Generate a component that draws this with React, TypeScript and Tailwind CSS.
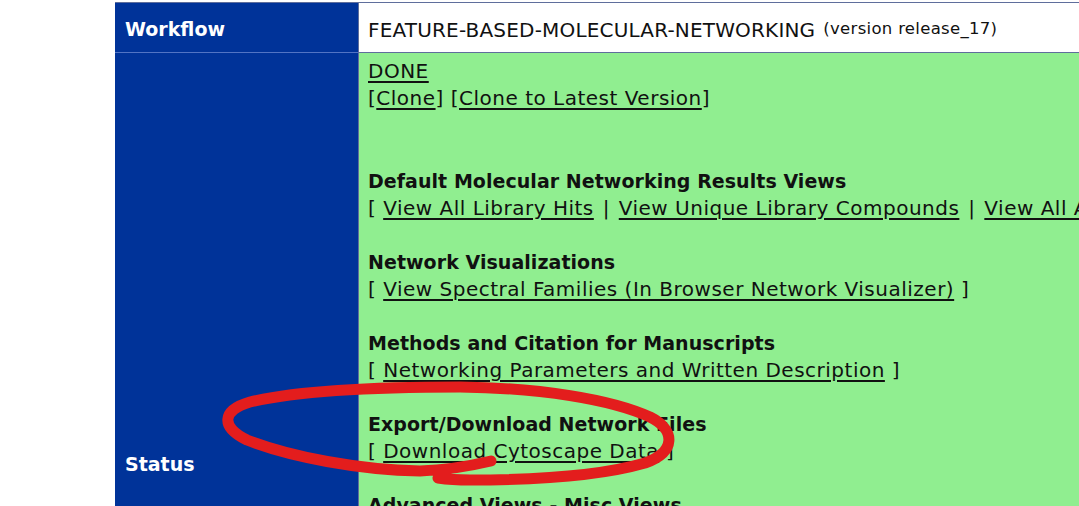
import React from "react";

const F = { fontFamily: '"DejaVu Sans", Verdana, sans-serif' };

function L({ children }: { children: React.ReactNode }) {
  return <a className="underline decoration-[1.5px] underline-offset-[3px] text-[#111]">{children}</a>;
}

function P() {
  return <span className="mx-[2px]">|</span>;
}

function Block({ title, children }: { title: string; children: React.ReactNode }) {
  return (
    <div className="mb-[27px]">
      <div className="text-[19px] font-bold tracking-[0.05px] leading-[27px]">{title}</div>
      <div className="leading-[27px] whitespace-nowrap">{children}</div>
    </div>
  );
}

export default function App() {
  return (
    <div className="w-[1079px] h-[506px] overflow-hidden bg-white text-[#111]" style={F}>
      <div className="ml-[115px] mt-[2px] w-[1300px] border-t border-[#5f6e9c]">
        <div className="flex">
          <div className="w-[243px] h-[50px] bg-[#003399] border-b border-[#5274c4] flex items-center pl-[10px] pt-[4px] text-white text-[19px] font-bold">
            Workflow
          </div>
          <div className="flex-1 h-[50px] bg-white border-l border-b border-[#5f6e9c] flex items-center pl-[9px] pt-[4px] text-[20px] tracking-[0.18px] whitespace-nowrap">
            FEATURE-BASED-MOLECULAR-NETWORKING
            <span className="text-[16.5px] tracking-[0.3px] ml-[8px]">(version release_17)</span>
          </div>
        </div>
        <div className="flex">
          <div className="w-[243px] h-[818px] bg-[#003399] flex items-center pl-[10px] pt-[4px] text-white text-[19px] font-bold">
            Status
          </div>
          <div className="flex-1 h-[818px] bg-[#90ee90] border-l border-[#5f6e9c] pl-[9px] pt-[5px] text-[20px] tracking-[0.5px]">
            <div className="leading-[27px]">
              <L>DONE</L>
            </div>
            <div className="leading-[27px]">
              [<L>Clone</L>] [<L>Clone to Latest Version</L>]
            </div>
            <div className="h-[56px]" />
            <Block title="Default Molecular Networking Results Views">
              [ <L>View All Library Hits</L> <P /> <L>View Unique Library Compounds</L> <P /> <L>View All Analog Hits</L> <P /> <L>View All Spectra</L> ]
            </Block>
            <Block title="Network Visualizations">
              [ <L>View Spectral Families (In Browser Network Visualizer)</L> ]
            </Block>
            <Block title="Methods and Citation for Manuscripts">
              [ <L>Networking Parameters and Written Description</L> ]
            </Block>
            <Block title="Export/Download Network Files">
              [ <L>Download Cytoscape Data</L> ]
            </Block>
            <Block title="Advanced Views - Misc Views">
              [ <L>View All Clusters With IDs</L> <P /> <L>View Compounds</L> ]
            </Block>
          </div>
        </div>
      </div>
      <svg className="absolute left-0 top-0 pointer-events-none" width="1079" height="506" viewBox="0 0 1079 506">
        <path
          d="M 491 461 C 470 466 450 470 420 471 C 360 470 290 457 247 440 C 220 427 222 410 250 402 C 300 390 380 387 460 387 C 540 388 610 399 650 417 C 676 430 676 452 645 463 C 600 476 530 480 470 480 C 455 480 445 479 438 478"
          fill="none"
          stroke="#e31d1d"
          strokeWidth="11"
          strokeLinecap="round"
          strokeLinejoin="round"
        />
      </svg>
    </div>
  );
}
